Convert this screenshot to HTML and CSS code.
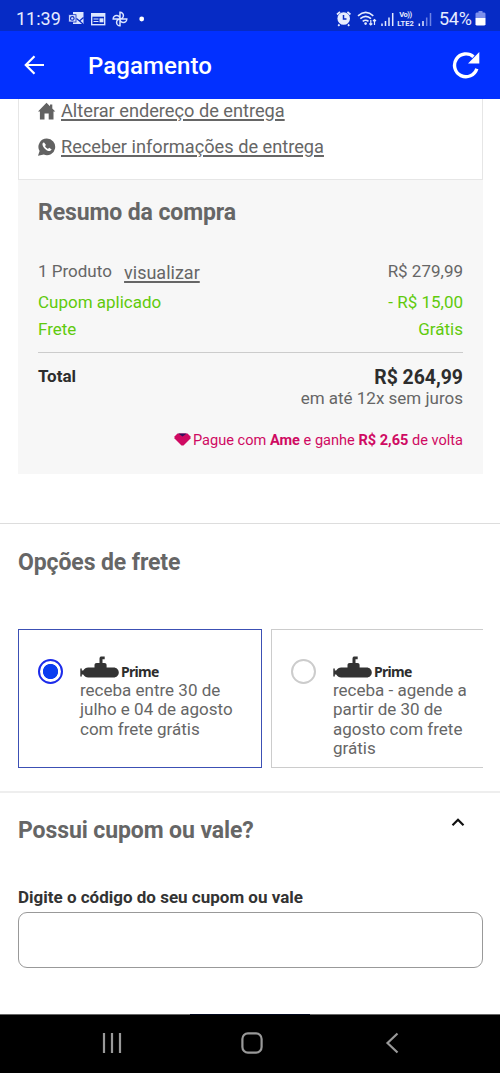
FILE: index.html
```html
<!DOCTYPE html>
<html lang="pt-BR">
<head>
<meta charset="utf-8">
<title>Pagamento</title>
<link rel="stylesheet" href="styles.css">
</head>
<body>
<svg class="defs" width="0" height="0">
  <symbol id="submarine" viewBox="0 0 40 24">
    <path d="M.3 12.500h1.500v2h1.400c1.300-1.900 2.800-3 5-3h6.300V9.300c0-1.600.7-2.300 2.200-2.300h2.800V2.700c0-1.600.8-2.200 2.200-2.200h3v2.700h-2.200V7h1.800c1.600 0 2.300.8 2.300 2.300v2.200h7c3 0 5.200 2.200 5.200 5s-2.200 5-5.200 5H8.200c-2.200 0-3.700-1-5-3H1.800v2H.3z"/>
  </symbol>
</svg>
<div class="screen">
  <div class="status">
    <span class="clock">11:39</span>
    <svg class="s-left" width="80" height="20" viewBox="0 0 80 20" fill="none" stroke="#dce6ff">
      <path d="M5 3h10.500v12H5z" fill="#dce6ff" stroke="none"/>
      <path d="M8.500 9.500l3 2.500L15.500 8.500M11 11.500l4 3.500" stroke="#0a2bc4" stroke-width="1.200"/>
      <rect x=".7" y="5.700" width="7.300" height="7.300" fill="#dce6ff" stroke="#0a2bc4" stroke-width=".8"/>
      <circle cx="4.300" cy="9.400" r="1.800" stroke="#0a2bc4" stroke-width="1.200"/>
      <rect x="23.700" y="4.700" width="13" height="11" stroke-width="1.400"/>
      <path d="M23.500 6.200h13.500" stroke-width="3"/>
      <path d="M25.500 10h5M25.500 12.500h5" stroke-width="1.200"/>
      <path d="M31.500 9.300h4v4h-4z" fill="#dce6ff" stroke="none"/>
      <path d="M52 10V3.200a3.400 3.400 0 0 1 0 6.800h6.800a3.400 3.400 0 0 1-6.800 0v6.800a3.400 3.400 0 0 1 0-6.800h-6.800a3.400 3.400 0 0 1 6.800 0z" stroke-width="1.500"/>
      <circle cx="73.700" cy="10" r="2.400" fill="#fff" stroke="none"/>
    </svg>
    <span class="s-right">
      <svg width="60" height="18" viewBox="0 0 60 18" fill="none" stroke="#e6ecff">
        <circle cx="7.700" cy="8.500" r="6.300" fill="#e6ecff" stroke="none"/>
        <path d="M1 4.500L4 1.800M14.400 4.500l-3-2.700M3.500 14.500l-1.300 1.300M12 14.500l1.300 1.300" stroke-width="1.800"/>
        <path d="M7.500 5v4h3" stroke="#0a2bc4" stroke-width="1.500"/>
        <path d="M22 5.800c5-4.300 10.500-4.300 15.300 0M24.300 8.700c3.500-3 7.300-3 10.700 0M26.700 11.400c2-1.600 3.900-1.600 5.800 0" stroke-width="1.600"/>
        <circle cx="29.600" cy="13.600" r="1.300" fill="#e6ecff" stroke="none"/>
        <path d="M34.800 10v5m-1.500-1.500l1.500 1.500 1.500-1.500M38.500 15v-5.500M37 11l1.500-1.500L40 11" stroke-width="1.200"/>
        <path d="M46 16v-2.500M49.500 16v-5M53 16V7.500M56.700 16V3" stroke-width="1.500"/>
      </svg>
      <span class="lte"><span class="vo">Vo))</span><span>LTE2</span></span>
      <svg width="14" height="18" viewBox="0 0 14 18" fill="none" stroke="#e6ecff" stroke-width="1.500">
        <path d="M1.300 16v-2.500M5 16v-5"/>
        <path d="M8.700 16V7.500M12.500 16V3" stroke="#6e83e6"/>
      </svg>
      <span class="pct">54%</span>
      <svg class="batt" width="11" height="15" viewBox="0 0 11 15"><path d="M1.500 1.500h2V0h4v1.500h2l1 1V7H.5V2.500z" fill="#7d90ec"/><path d="M.5 7h10v6.500l-1 1h-8l-1-1z" fill="#fff"/></svg>
    </span>
  </div>

  <header class="appbar">
    <svg width="22" height="22" viewBox="0 0 22 22" fill="none" stroke="#fff" stroke-width="2.200"><path d="M20 11H2M10.500 2.300L1.800 11l8.700 8.700"/></svg>
    <h1>Pagamento</h1>
    <svg class="reload" width="28" height="28" viewBox="0 0 28 28"><path d="M24.800 17.800A11.400 11.400 0 1 1 21.500 5.800" fill="none" stroke="#fff" stroke-width="3.400"/><path d="M27.300 1v11.500H16z" fill="#fff"/></svg>
  </header>

  <main>
    <section class="address">
      <div class="link-row">
        <svg width="18" height="18" viewBox="0 0 18 18" fill="#626262"><path d="M8.500.7l3.500 3.500V2.500h2.300v3.900L17.300 9.600h-1.800V17.500h-4.800V11.500H6.500v6H1.900V9.600H0z"/></svg>
        <a>Alterar endereço de entrega</a>
      </div>
      <div class="link-row">
        <svg width="18" height="18" viewBox="0 0 18 18"><path d="M8.800.6a8.300 8.300 0 1 1-3 16L0 17.800l1.600-4.700A8.300 8.300 0 0 1 8.800.6z" fill="#626262"/><path d="M5.900 4.200L4.500 5.400c-.6 3.200 4 8 7.500 7.700l1.700-1.500-2.500-1.900-1.300 1.200c-1.300-.5-2.300-1.500-2.900-2.800L8 6.900z" fill="#fff"/></svg>
        <a>Receber informações de entrega</a>
      </div>
    </section>

    <section class="summary">
      <h2>Resumo da compra</h2>
      <div class="row first"><span>1 Produto <a>visualizar</a></span><span>R$ 279,99</span></div>
      <div class="row green coupon"><span>Cupom aplicado</span><span>- R$ 15,00</span></div>
      <div class="row green"><span>Frete</span><span>Grátis</span></div>
      <div class="row total"><strong>Total</strong><strong class="price">R$ 264,99</strong></div>
      <p class="installments">em até 12x sem juros</p>
      <p class="ame">
        <svg width="17" height="13" viewBox="0 0 17 13"><path d="M3.500.5h10L16.500 3.500v2L9.500 12.500h-2L.5 5.500v-2z" fill="#cf0a62"/><path d="M4.300.5h8.400L8.500 3.500z" fill="#32105c"/></svg>
        <span>Pague com <b>Ame</b> e ganhe <b>R$ 2,65</b> de volta</span>
      </p>
    </section>

    <section class="shipping">
      <h2>Opções de frete</h2>
      <div class="options">
        <div class="option selected">
          <span class="radio"></span>
          <div class="desc">
            <div class="prime"><svg width="40" height="24"><use href="#submarine"/></svg><b>Prime</b></div>
            receba entre 30 de<br>julho e 04 de agosto<br>com frete grátis
          </div>
        </div>
        <div class="option">
          <span class="radio"></span>
          <div class="desc">
            <div class="prime"><svg width="40" height="24"><use href="#submarine"/></svg><b>Prime</b></div>
            receba - agende a<br>partir de 30 de<br>agosto com frete<br>grátis
          </div>
        </div>
      </div>
    </section>

    <section class="voucher">
      <div class="voucher-head">
        <h2>Possui cupom ou vale?</h2>
        <svg width="14" height="9" viewBox="0 0 14 9"><path d="M1.500 7.300L7 1.800l5.500 5.500" fill="none" stroke="#111" stroke-width="2.200"/></svg>
      </div>
      <label for="code">Digite o código do seu cupom ou vale</label>
      <input id="code" type="text">
    </section>
  </main>

  <nav class="navbar">
    <svg width="20" height="22" viewBox="0 0 20 22" stroke="#999" stroke-width="2.200"><path d="M2 1v20M10 1v20M18 1v20"/></svg>
    <svg class="home" width="22" height="22" viewBox="0 0 22 22"><rect x="1.400" y="1.400" width="19.200" height="19.200" rx="5.500" fill="none" stroke="#999" stroke-width="2.200"/></svg>
    <svg width="14" height="22" viewBox="0 0 14 22"><path d="M12.500 1.500L2.500 11l10 9.500" fill="none" stroke="#999" stroke-width="2.200"/></svg>
  </nav>
</div>
</body>
</html>
```
FILE: styles.css
```css
* { box-sizing: border-box; }
body { margin: 0; background: #fff; font-family: Roboto, sans-serif; color: #666; }
h1, h2, p { margin: 0; }
svg { display: block; flex: none; }
.defs { display: none; }
.screen { width: 500px; height: 1073px; display: flex; flex-direction: column; overflow: hidden; }

.status { height: 31px; flex: none; background: #062bc5; display: flex; align-items: center; padding: 7px 14px 0 16px; color: #e6ecff; line-height: 22px; }
.clock { font-size: 18px; width: 52px; }
.s-right { margin-left: auto; display: flex; align-items: center; }
.s-right .batt { margin-top: -1px; }
.lte { display: flex; flex-direction: column; align-items: center; width: 19px; margin: 0 3px 0 0; font-size: 7.500px; font-weight: 700; line-height: 9px; }
.vo { letter-spacing: -.4px; }
.pct { font-size: 18px; margin: 0 3px 0 7px; width: 33px; white-space: nowrap; letter-spacing: -.3px; }

.appbar { height: 68px; flex: none; background: #0230ff; display: flex; align-items: center; padding: 0 20px 0 24px; color: #fff; }
.appbar h1 { font-size: 24px; font-weight: 500; margin-left: 42px; line-height: 32px; padding-top: 2px; letter-spacing: .1px; }
.reload { margin-left: auto; }

main { flex: 1; display: flex; flex-direction: column; min-height: 0; }
.address { height: 81px; margin: 0 17px 0 18px; padding-left: 19px; border: 1px solid #e6e6e6; border-top: 0; flex: none; }
.link-row { display: flex; align-items: center; gap: 5px; height: 36px; font-size: 18.200px; }
.link-row:first-child { height: 23px; margin-bottom: 7px; }
.link-row a { margin-top: -1px; }
.link-row a, .row a { text-decoration: underline; text-decoration-thickness: 1.500px; text-underline-offset: 2px; }

.summary { height: 294px; flex: none; margin: 0 17px 0 18px; background: #f7f7f7; padding: 18px 20px 0; }
h2 { font-size: 23px; line-height: 30px; font-weight: 700; color: #666; letter-spacing: -.1px; }
.row { display: flex; justify-content: space-between; align-items: center; height: 27px; font-size: 17px; white-space: nowrap; }
.row.first { margin-top: 29px; }
.row a { display: inline-block; margin-left: 8px; font-size: 18px; position: relative; top: 2px; }
.row.green { color: #60ca0c; }
.coupon { margin-top: 4px; }
.total { margin-top: 10px; padding-top: 10px; height: 36px; border-top: 1px solid #ccc; color: #2d2d2d; }
.total .price { font-size: 19.400px; padding-top: 3px; }
.installments { text-align: right; font-size: 17px; line-height: 20px; }
.ame { display: flex; justify-content: flex-end; align-items: center; gap: 2px; margin-top: 22px; font-size: 14.570px; line-height: 20px; color: #cf0a62; }
.ame svg { margin-top: -2px; }

.shipping { height: 269px; flex: none; margin-top: 49px; border-top: 1px solid #ddd; padding: 24px 17px 0 18px; }
.options { display: flex; gap: 9px; margin-top: 51px; overflow: hidden; }
.option { flex: none; width: 244px; height: 139px; border: 1px solid #ccc; display: flex; padding: 27px 0 0 19px; gap: 17px; }
.option.selected { border-color: #3c50b4; }
.radio { width: 25px; height: 25px; margin-top: 2px; flex: none; border: 2px solid #ccc; border-radius: 50%; }
.selected .radio { border: 2.500px solid #1c2bea; background: radial-gradient(circle, #0a3cf0 7.200px, #fff 8px); }
.desc { font-size: 17px; line-height: 19.600px; white-space: nowrap; }
.prime { display: flex; align-items: flex-end; height: 23px; margin-bottom: .500px; color: #2d2d2d; fill: #333; }
.prime b { font-family: "Noto Sans", sans-serif; font-size: 14px; line-height: 17px; margin-left: 1px; letter-spacing: -.700px; }

.voucher { border-top: 2px solid #eee; margin-top: -1px; padding: 23px 17px 0 18px; flex: 1; min-height: 0; }
.voucher-head { display: flex; justify-content: space-between; align-items: flex-start; padding-right: 18px; }
.voucher-head svg { margin-top: 2px; }
label { display: block; margin-top: 41px; font-size: 17px; line-height: 20px; font-weight: 700; color: #333; }
input { display: block; width: 465px; height: 56px; margin-top: 5px; border: 1px solid #999; border-radius: 9px; background: #fff; }

.navbar { height: 59px; flex: none; background: #000; border-top: 1px solid; border-image: linear-gradient(to right, #666 190px, #02081c 190px, #02081c 310px, #666 310px) 1; display: flex; justify-content: space-between; align-items: center; padding: 0 101px 2px 102px; }
.home { margin-right: 3px; }
```
